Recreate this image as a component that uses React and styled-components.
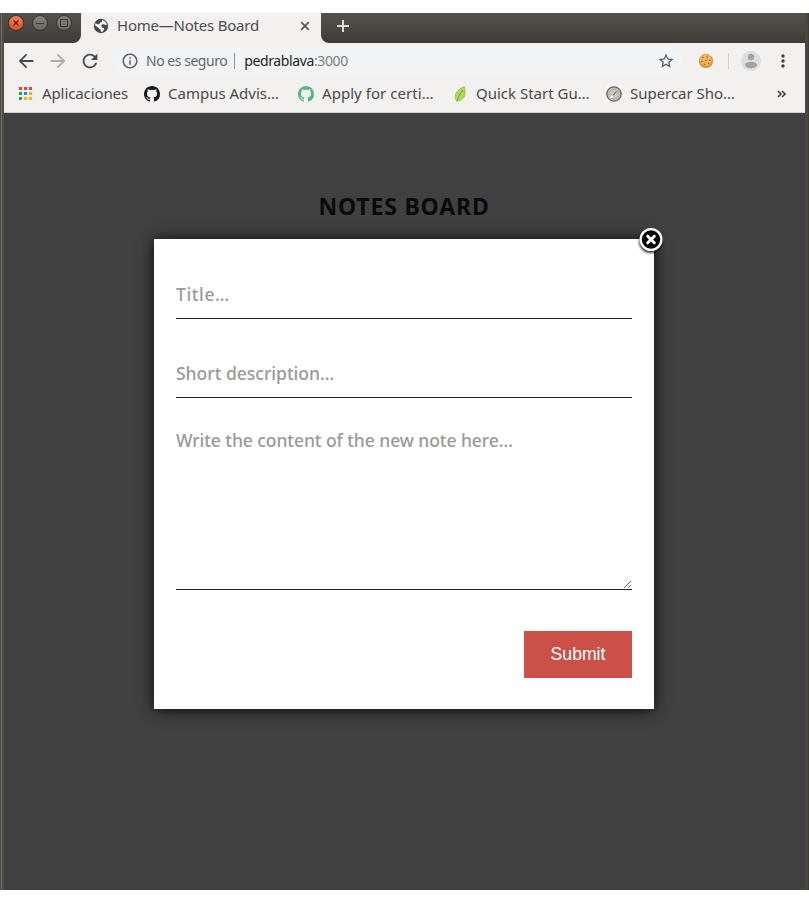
import React from 'react';
import styled, { createGlobalStyle } from 'styled-components';
import {
  MdArrowBack,
  MdArrowForward,
  MdRefresh,
  MdInfoOutline,
  MdStarBorder,
  MdMoreVert,
} from 'react-icons/md';

const GlobalStyle = createGlobalStyle`
  * { box-sizing: border-box; }
  body {
    margin: 0;
    background: #fff;
    font-family: 'Noto Sans', 'Open Sans', sans-serif;
  }
  svg { display: block; flex: none; }
`;

const Desktop = styled.div`
  height: 903px;
  padding: 13px 0;
`;

const Window = styled.div`
  display: grid;
  grid-template-columns: 4px 1fr 4px;
  grid-template-rows: 30px 1fr;
  height: 877px;
  overflow: hidden;
  background: linear-gradient(#53524a, #3d3c37 30px);
`;

const Frame = styled.div`
  grid-row: 1 / 3;
  grid-column: ${({ $side }) => ($side === 'left' ? 1 : 3)};
  background: ${({ $side }) =>
    $side === 'left'
      ? 'linear-gradient(90deg, #494a48 1px, #75716a 1px, #75716a 2px, #514c43 2px)'
      : 'linear-gradient(90deg, #4c473d 3px, #3c3b37 3px)'};
`;

const TitleBar = styled.div`
  display: flex;
  grid-column: 2;
  background: #f2f1f0;
`;

const BarEnd = styled.div`
  display: flex;
  background: linear-gradient(#53524a, #3d3c37);
`;

const WindowButtons = styled(BarEnd)`
  width: 77px;
  gap: 8px;
  padding: 2px 0 0 4px;
  border-radius: 0 0 8px 0;
`;

const WindowButton = styled.span`
  display: grid;
  place-items: center;
  width: 16px;
  height: 16px;
  border: 1px solid #34332f;
  border-radius: 50%;
  color: #3a3935;
  background: ${({ $close }) =>
    $close ? 'linear-gradient(#f67e5c, #e6501f)' : 'linear-gradient(#85837b, #686760)'};
`;

const Tab = styled.div`
  display: flex;
  align-items: center;
  width: 240px;
  height: 26px;
  padding: 0 11px 0 12px;
  color: #4b4b4d;
`;

const TabTitle = styled.span`
  flex: 1;
  margin-left: 8px;
  padding-bottom: 2px;
  font-size: 15px;
  line-height: 20px;
  letter-spacing: -0.22px;
  white-space: nowrap;
`;

const TabStripRest = styled(BarEnd)`
  flex: 1;
  padding: 7px 0 0 16px;
  border-radius: 0 0 0 8px;
  color: #dedcd6;
`;

const Content = styled.div`
  display: flex;
  grid-column: 2;
  flex-direction: column;
  min-width: 0;
`;

const Toolbar = styled.div`
  display: flex;
  align-items: center;
  height: 36px;
  padding-left: 11px;
  background: #f2f1f0;
  color: #494a4c;
`;

const NavButton = styled.span`
  display: grid;
  place-items: center;
  width: 22px;
  margin-right: 10px;
  color: ${({ $disabled }) => ($disabled ? '#adacab' : '#48494b')};
`;

const AddressBar = styled.div`
  display: flex;
  align-items: center;
  width: 571px;
  height: 28px;
  margin-left: 1px;
  padding: 0 8px 0 9px;
  border-radius: 14px;
  background: #f1f3f4;
  font-size: 14px;
  line-height: 20px;
  white-space: nowrap;
`;

const Security = styled.span`
  margin: 0 7px 0 7px;
  color: #63676b;
  letter-spacing: -0.47px;
`;

const Divider = styled.i`
  width: 1px;
  height: 16px;
  background: ${({ $light }) => ($light ? '#cfcfce' : '#8d9093')};
`;

const Address = styled.span`
  flex: 1;
  margin-left: 9px;
  color: #1c1d20;
  letter-spacing: -0.38px;
`;

const Port = styled.span`
  color: #7b7f83;
`;

const Actions = styled.div`
  display: flex;
  flex: 1;
  align-items: center;
  padding-left: 15px;
`;

const ActionDivider = styled(Divider)`
  margin: 0 12px 0 14px;
`;

const MenuIcon = styled(MdMoreVert)`
  margin-left: 12px;
  color: #3f4042;
`;

const Bookmarks = styled.div`
  display: flex;
  align-items: center;
  height: 34px;
  padding: 0 18px 4px 14px;
  background: #f2f1f0;
  border-bottom: 1px solid #d0d1ce;
`;

const Bookmark = styled.div`
  display: flex;
  flex: none;
  align-items: center;
  gap: 8px;
  width: ${({ $width }) => $width}px;
  color: #48484a;
  font-size: 15px;
  line-height: 20px;
  letter-spacing: ${({ $spacing = 0 }) => $spacing}px;
  white-space: nowrap;
`;

const BookmarkLabel = styled.span`
  padding-bottom: 2px;
`;

const Overflow = styled.span`
  margin-left: auto;
  color: #3d3d3f;
`;

const Page = styled.main`
  display: flex;
  flex: 1;
  flex-direction: column;
  align-items: center;
  padding-top: 77px;
  background: #404040;
`;

const Heading = styled.h1`
  margin: 0 1px 0 0;
  color: #0a0a0a;
  font-size: 23px;
  font-weight: 700;
  line-height: 32px;
  letter-spacing: 0.84px;
`;

const Dialog = styled.form`
  position: relative;
  display: flex;
  flex-direction: column;
  width: 500px;
  height: 470px;
  margin: 17px 1px 0 0;
  padding: 32px 22px 31px;
  background: #fff;
  box-shadow: 0 1px 14px rgba(0, 0, 0, 0.9);
`;

const CloseButton = styled.span`
  position: absolute;
  top: -15px;
  right: -13px;
`;

const TextInput = styled.input`
  width: 100%;
  height: 48px;
  margin: 0 0 31px;
  padding: 0 0 1px;
  border: 0;
  border-bottom: 1px solid #1f1f1f;
  border-radius: 0;
  outline: 0;
  background: transparent;
  font: 500 17.5px/22px 'Noto Sans', 'Open Sans', sans-serif;
  letter-spacing: ${({ $spacing }) => $spacing}px;

  &::placeholder {
    color: #999;
    opacity: 1;
  }
`;

const TextArea = styled(TextInput)`
  display: block;
  height: 161px;
  margin-bottom: 41px;
  resize: both;
`;

const Submit = styled.button`
  align-self: flex-end;
  width: 108px;
  height: 47px;
  padding: 0 0 1px;
  border: 0;
  background: #cb5148;
  color: #fff;
  font: 17.6px 'Liberation Sans', Arial, sans-serif;
`;

const GlobeIcon = () => (
  <svg width="16" height="16" viewBox="0 0 16 16">
    <circle cx="8" cy="8" r="7.2" fill="#48494b" />
    <path d="M9.3 1.9c2.500.6 4.200 2.400 4.600 4.700l-1.500.8-1.300-1-1.800.2-1 1.400 1 1.500 1.700.3.2 1.500-1.400 2.300-2 .4.100-2-1.700-1.300L4.800 9.200 2 7.600c0-.9.3-1.700.7-2.500l2 1.200 1.700-.4.400-1.500 2-.4z" fill="#f2f1f0" />
    <path d="m8.800 6.800 2.800-.4 1.800 1.600-.7 2.200-2.200-.2-1.900-1.200zM3 5.200 5.500 2.600l2.300.5-.6 1.600-1.400.7-.2 1.200z" fill="#48494b" />
  </svg>
);

const GithubIcon = ({ color }) => (
  <svg width="16" height="16" viewBox="0 0 16 16" fill={color}>
    <path d="M8 0C3.58 0 0 3.58 0 8c0 3.54 2.29 6.53 5.47 7.59.4.07.55-.17.55-.38 0-.19-.01-.82-.01-1.49-2.01.37-2.53-.49-2.69-.94-.09-.23-.48-.94-.82-1.13-.28-.15-.68-.52-.01-.53.63-.01 1.08.58 1.23.82.72 1.21 1.87.87 2.33.66.07-.52.28-.87.51-1.07-1.78-.2-3.64-.89-3.64-3.95 0-.87.31-1.59.82-2.15-.08-.2-.36-1.02.08-2.12 0 0 .67-.21 2.2.82.64-.18 1.32-.27 2-.27s1.36.09 2 .27c1.53-1.04 2.2-.82 2.2-.82.44 1.1.16 1.92.08 2.12.51.56.82 1.27.82 2.15 0 3.07-1.87 3.75-3.65 3.95.29.25.54.73.54 1.48 0 1.07-.01 1.93-.01 2.2 0 .21.15.46.55.38A8.01 8.01 0 0 0 16 8c0-4.42-3.58-8-8-8z" />
  </svg>
);

const AppsIcon = () => (
  <svg width="16" height="16" viewBox="0 0 16 16">
    {[
      ['#ee3f35', '#ee3f35', '#ee3f35'],
      ['#23a05a', '#1e88e5', '#f6a623'],
      ['#23a05a', '#fbb017', '#fbb017'],
    ].map((row, y) =>
      row.map((fill, x) => (
        <rect key={`${x}-${y}`} x={1 + x * 5} y={1 + y * 5} width="3" height="3" fill={fill} />
      )),
    )}
  </svg>
);

const LeafIcon = () => (
  <svg width="16" height="16" viewBox="0 0 16 16">
    <path d="M12.5.6C8 2 3 6 3.2 11c.1 2 .8 3.2 1.7 4.2 4.4-.5 7.6-3 8.1-7.2.3-2.7-.1-5-.5-7.4z" fill="#abdb58" stroke="#8fbb4d" strokeWidth=".7" />
    <path d="M10.8 4C8.5 7 6.500 10 5 15" fill="none" stroke="#668f2d" strokeWidth=".8" />
  </svg>
);

const GaugeIcon = () => (
  <svg width="16" height="16" viewBox="0 0 16 16">
    <rect width="16" height="16" fill="#fafafa" />
    <circle cx="8" cy="8" r="7.2" fill="#c6c2ba" stroke="#66635c" strokeWidth="1.3" />
    <circle cx="8" cy="8" r="5" fill="none" stroke="#918d84" strokeWidth="1" strokeDasharray="1 1.4" />
    <path d="M4.5 11.5 7 9.5" stroke="#fff" strokeWidth="2" />
    <path d="M7 9.5 10.500 5.500" stroke="#5d5952" />
  </svg>
);

const CookieIcon = () => (
  <svg width="16" height="16" viewBox="0 0 16 16">
    <path d="M8 1C4 .9 1 4 1 8s3 7 7 7 7-3 7-7c0-2-.6-3.6-1.8-5L12 3.2 10.8 1.6z" fill="#de8a32" />
    <path d="M8 1.5C4.5 1.5 2 4 2 7.3s2.8 5.8 6 5.8 5.8-2.6 5.8-6c0-1.5-.6-2.9-1.6-3.7L10 2z" fill="#f3b45d" />
    {[[5, 4.5], [9, 4], [12, 7.2], [8, 7.5], [4, 8.5], [10.5, 10.5], [6.5, 11.3]].map(([x, y]) => (
      <circle key={`${x}-${y}`} cx={x} cy={y} r=".75" fill="#86502a" />
    ))}
  </svg>
);

const AvatarIcon = () => (
  <svg width="20" height="20" viewBox="0 0 20 20">
    <circle cx="10" cy="10" r="10" fill="#dededf" />
    <circle cx="10" cy="6" r="3.2" fill="#a2a2a3" />
    <ellipse cx="10" cy="14" rx="6" ry="3.2" fill="#a2a2a3" />
  </svg>
);

const CloseIcon = () => (
  <svg width="32" height="32" viewBox="0 0 32 32">
    <defs>
      <filter id="soft" x="-30%" y="-30%" width="160%" height="160%">
        <feGaussianBlur stdDeviation="1.3" />
      </filter>
    </defs>
    <circle cx="15.5" cy="17.5" r="11.5" fill="#000" opacity=".75" filter="url(#soft)" />
    <circle cx="16" cy="15.5" r="11.5" fill="#fff" />
    <circle cx="16" cy="15.5" r="9.2" fill="#050505" />
    <path d="m12.7 12.2 6.6 6.6m0-6.6-6.6 6.6" stroke="#fff" strokeWidth="3" strokeLinecap="round" />
  </svg>
);

const bookmarks = [
  { label: 'Aplicaciones', icon: <AppsIcon />, width: 126, spacing: -0.1 },
  { label: 'Campus Advis…', icon: <GithubIcon color="#17171c" />, width: 154, spacing: 0 },
  { label: 'Apply for certi…', icon: <GithubIcon color="#59b583" />, width: 154, spacing: 0.05 },
  { label: 'Quick Start Gu…', icon: <LeafIcon />, width: 154, spacing: 0 },
  { label: 'Supercar Sho…', icon: <GaugeIcon />, width: 140, spacing: -0.03 },
];

export default function App() {
  return (
    <Desktop>
      <GlobalStyle />
      <Window>
        <Frame $side="left" />
        <TitleBar>
          <WindowButtons>
            <WindowButton $close>
              <svg width="8" height="8" viewBox="0 0 8 8">
                <path d="m1.5 1.5 5 5m0-5-5 5" stroke="#49251a" strokeWidth="1.2" />
              </svg>
            </WindowButton>
            <WindowButton>
              <svg width="10" height="8" viewBox="0 0 10 8">
                <path d="M1 4.5h8" stroke="currentColor" />
              </svg>
            </WindowButton>
            <WindowButton>
              <svg width="8" height="8" viewBox="0 0 8 8">
                <path d="M.5.5h7v7h-7z" fill="none" stroke="currentColor" />
              </svg>
            </WindowButton>
          </WindowButtons>
          <Tab>
            <GlobeIcon />
            <TabTitle>Home—Notes Board</TabTitle>
            <svg width="10" height="10" viewBox="0 0 10 10">
              <path d="m1.2 1.2 7.6 7.6m0-7.6-7.6 7.6" stroke="#555658" strokeWidth="1.7" />
            </svg>
          </Tab>
          <TabStripRest>
            <svg width="12" height="12" viewBox="0 0 12 12">
              <path d="M6 0v12M0 6h12" stroke="currentColor" strokeWidth="2" />
            </svg>
          </TabStripRest>
        </TitleBar>
        <Frame $side="right" />
        <Content>
          <Toolbar>
            <NavButton><MdArrowBack size={22} /></NavButton>
            <NavButton $disabled><MdArrowForward size={22} /></NavButton>
            <NavButton><MdRefresh size={22} /></NavButton>
            <AddressBar>
              <MdInfoOutline size={18} color="#5a5e62" />
              <Security>No es seguro</Security>
              <Divider />
              <Address>pedrablava<Port>:3000</Port></Address>
              <MdStarBorder size={18} color="#55585c" />
            </AddressBar>
            <Actions>
              <CookieIcon />
              <ActionDivider $light />
              <AvatarIcon />
              <MenuIcon size={20} />
            </Actions>
          </Toolbar>
          <Bookmarks>
            {bookmarks.map(({ label, icon, width, spacing }) => (
              <Bookmark key={label} $width={width} $spacing={spacing}>
                {icon}
                <BookmarkLabel>{label}</BookmarkLabel>
              </Bookmark>
            ))}
            <Overflow>
              <svg width="10" height="8" viewBox="0 0 10 8">
                <path d="m1 1 3 3-3 3m4-6 3 3-3 3" fill="none" stroke="currentColor" strokeWidth="1.6" />
              </svg>
            </Overflow>
          </Bookmarks>
          <Page>
            <Heading>NOTES BOARD</Heading>
            <Dialog>
              <TextInput placeholder="Title…" $spacing={0.6} />
              <TextInput placeholder="Short description…" $spacing={0} />
              <TextArea as="textarea" placeholder="Write the content of the new note here…" $spacing={-0.07} />
              <Submit type="button">Submit</Submit>
              <CloseButton><CloseIcon /></CloseButton>
            </Dialog>
          </Page>
        </Content>
      </Window>
    </Desktop>
  );
}
